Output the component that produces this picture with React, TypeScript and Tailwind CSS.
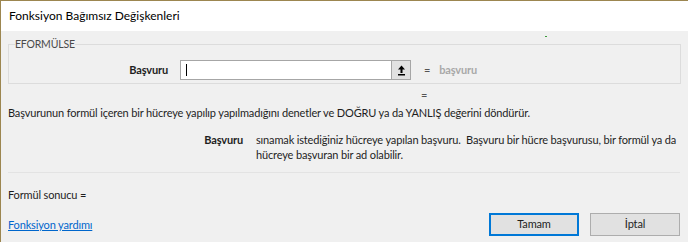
import React from "react";

const font = { fontFamily: 'Lato, "Noto Sans", sans-serif' };

function ArgRow() {
  return (
    <div className="flex h-[20px] items-center">
      <div className="w-[159px] text-right font-bold text-[#1e1e1e]">Başvuru</div>
      <div className="ml-[12px] flex h-[20px] w-[212px] items-center border border-[#a6a6a6] bg-white pl-[5px]">
        <div className="h-[12px] w-px bg-black" />
      </div>
      <button
        type="button"
        className="flex h-[20px] w-[19px] items-center justify-center border border-l-0 border-[#a6a6a6] bg-[#e1e1e1]"
      >
        <svg width="9" height="11" viewBox="0 0 9 11">
          <path d="M4.5 0.5 L8 4.5 H5.5 V8 H3.5 V4.5 H1 Z" fill="#000" />
          <rect x="1" y="9" width="7" height="1.5" fill="#000" />
        </svg>
      </button>
      <div className="ml-[13px] text-[#555]">=</div>
      <div className="ml-[9px] font-bold text-[#a8a8a8]">başvuru</div>
    </div>
  );
}

export default function App() {
  return (
    <div
      className="flex h-[242px] w-[688px] flex-col overflow-hidden border-l border-t border-[#9c8650] bg-[#f0f0f0] text-[11px] tracking-[-0.15px] text-[#1e1e1e]"
      style={font}
    >
      <div className="flex h-[30px] shrink-0 items-center bg-white pl-[8px] text-[12px] tracking-normal text-black">
        Fonksiyon Bağımsız Değişkenleri
      </div>

      <div className="relative flex flex-1 flex-col px-[7px]">
        <div className="absolute left-[544px] top-[5px] h-px w-[2px] bg-[#3a9a3a]" />

        <div className="relative mt-[13px] h-[40px] border border-[#dcdcdc] pt-[15px]">
          <div className="absolute -top-[8px] left-[6px] bg-[#f0f0f0] text-[10.5px] tracking-[-0.2px] text-[#4a4a4a]">
            EFORMÜLSE
          </div>
          <ArgRow />
        </div>

        <div className="mt-[4px] h-[14px] pl-[413px] leading-[14px] text-[#555]">=</div>
        <div className="mt-[3px] leading-[16px]">
          Başvurunun formül içeren bir hücreye yapılıp yapılmadığını denetler ve DOĞRU ya da YANLIŞ değerini döndürür.
        </div>

        <div className="mt-[11px] flex leading-[15px]">
          <div className="w-[235px] text-right font-bold">Başvuru</div>
          <div className="ml-[13px] w-[425px] text-[#1e1e1e]">
            sınamak istediğiniz hücreye yapılan başvuru.&nbsp; Başvuru bir hücre başvurusu, bir formül ya da hücreye başvuran bir ad olabilir.
          </div>
        </div>

        <div className="mt-[10px] h-px w-[672px] bg-[#e3e3e3]" />

        <div className="mt-[14px] leading-[16px]">Formül sonucu =</div>

        <div className="mt-[10px] flex items-center">
          <a href="#" className="mt-[2px] text-[#0066cc] underline">
            Fonksiyon yardımı
          </a>
          <div className="ml-auto flex gap-[11px] pr-[1px]">
            <button
              type="button"
              className="h-[23px] w-[90px] border-2 border-[#0078d7] bg-[#e1e1e1] text-[#1e1e1e]"
            >
              Tamam
            </button>
            <button
              type="button"
              className="h-[23px] w-[90px] border border-[#adadad] bg-[#e1e1e1] text-[#1e1e1e]"
            >
              İptal
            </button>
          </div>
        </div>
      </div>
    </div>
  );
}
